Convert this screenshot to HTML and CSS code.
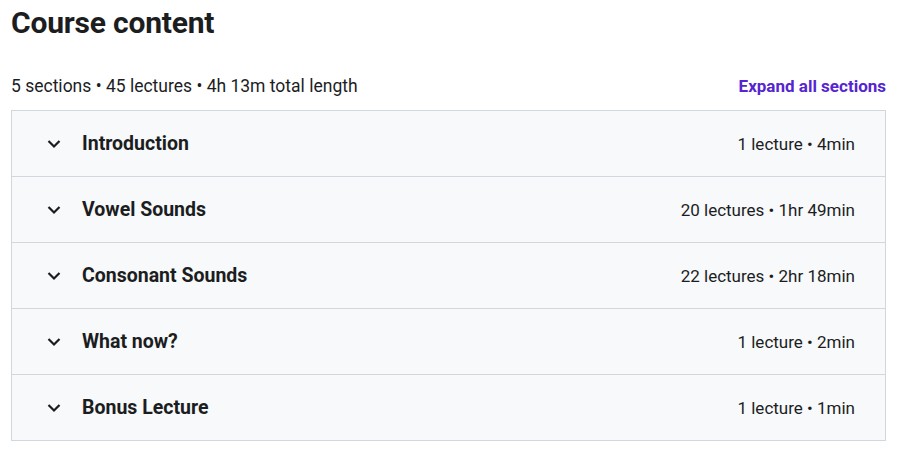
FILE: index.html
```html
<!DOCTYPE html>
<html lang="en">
<head>
<meta charset="utf-8">
<link rel="stylesheet" href="styles.css">
</head>
<body>
<div class="page">
  <h2 class="title">Course content</h2>
  <div class="meta">
    <span class="meta-text">5 sections • 45 lectures • 4h 13m total length</span>
    <button class="expand">Expand all sections</button>
  </div>
  <div class="sections">
    <div class="section">
      <div class="left"><svg class="chev" width="14" height="10" viewBox="0 0 14 10"><path d="M1.5 2 L7 7.5 L12.5 2" fill="none" stroke="#1c1d1f" stroke-width="2.2"/></svg><span class="name">Introduction</span></div>
      <span class="info">1 lecture • 4min</span>
    </div>
    <div class="section">
      <div class="left"><svg class="chev" width="14" height="10" viewBox="0 0 14 10"><path d="M1.5 2 L7 7.5 L12.5 2" fill="none" stroke="#1c1d1f" stroke-width="2.2"/></svg><span class="name">Vowel Sounds</span></div>
      <span class="info">20 lectures • 1hr 49min</span>
    </div>
    <div class="section">
      <div class="left"><svg class="chev" width="14" height="10" viewBox="0 0 14 10"><path d="M1.5 2 L7 7.5 L12.5 2" fill="none" stroke="#1c1d1f" stroke-width="2.2"/></svg><span class="name">Consonant Sounds</span></div>
      <span class="info">22 lectures • 2hr 18min</span>
    </div>
    <div class="section">
      <div class="left"><svg class="chev" width="14" height="10" viewBox="0 0 14 10"><path d="M1.5 2 L7 7.5 L12.5 2" fill="none" stroke="#1c1d1f" stroke-width="2.2"/></svg><span class="name">What now?</span></div>
      <span class="info">1 lecture • 2min</span>
    </div>
    <div class="section">
      <div class="left"><svg class="chev" width="14" height="10" viewBox="0 0 14 10"><path d="M1.5 2 L7 7.5 L12.5 2" fill="none" stroke="#1c1d1f" stroke-width="2.2"/></svg><span class="name">Bonus Lecture</span></div>
      <span class="info">1 lecture • 1min</span>
    </div>
  </div>
</div>
</body>
</html>
```
FILE: styles.css
```css
* { box-sizing: border-box; }
body {
  margin: 0;
  background: #fff;
  font-family: Roboto, "Liberation Sans", sans-serif;
  color: #1c1d1f;
}
.page {
  width: 875px;
  margin-left: 11px;
}
.title {
  margin: 0;
  padding-top: 5px;
  font-size: 30px;
  font-weight: 700;
  line-height: 36px;
  letter-spacing: -0.2px;
}
.meta {
  display: flex;
  justify-content: space-between;
  align-items: center;
  margin-top: 34px;
  height: 22px;
  margin-bottom: 13px;
}
.meta-text {
  font-size: 17.5px;
  line-height: 22px;
}
.expand {
  border: 0;
  background: none;
  padding: 0;
  font-family: inherit;
  font-size: 17px;
  font-weight: 700;
  color: #5624d0;
  line-height: 22px;
  cursor: pointer;
}
.sections {
  border: 1px solid #d1d7dc;
  border-bottom: 0;
}
.section {
  display: flex;
  justify-content: space-between;
  align-items: center;
  height: 66px;
  padding: 0 30px 0 35px;
  background: #f7f9fa;
  border-bottom: 1px solid #d1d7dc;
}
.left {
  display: flex;
  align-items: center;
}
.chev {
  display: block;
  margin-right: 21px;
}
.name {
  font-size: 19.5px;
  font-weight: 700;
  line-height: 22px;
}
.info {
  font-size: 17px;
  line-height: 22px;
}
```
